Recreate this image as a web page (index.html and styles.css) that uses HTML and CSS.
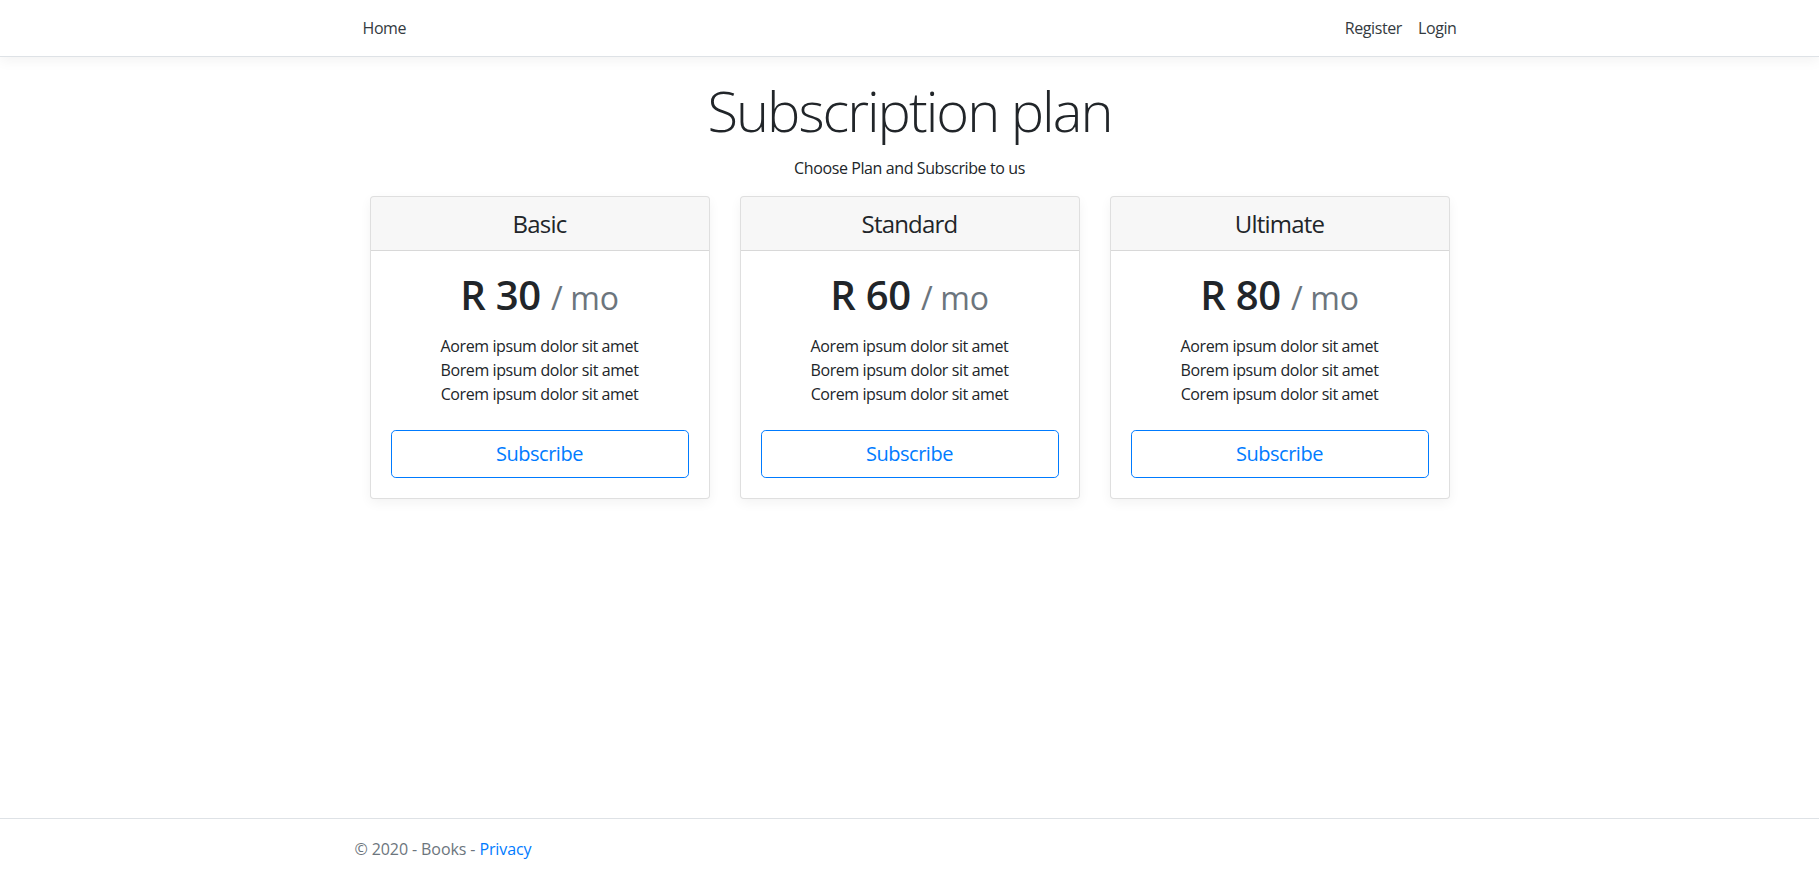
FILE: index.html
```html
<!DOCTYPE html>
<html lang="en">
<head>
<meta charset="utf-8">
<title>Subscription plan - Books</title>
<link rel="stylesheet" href="styles.css">
</head>
<body>
<header class="site-header">
  <nav class="navbar">
    <div class="container nav-inner">
      <ul class="nav-list">
        <li><a class="nav-link" href="#">Home</a></li>
      </ul>
      <ul class="nav-list">
        <li><a class="nav-link" href="#">Register</a></li>
        <li><a class="nav-link" href="#">Login</a></li>
      </ul>
    </div>
  </nav>
</header>

<main class="container main">
  <div class="pricing-header">
    <h1 class="display-title">Subscription plan</h1>
    <p class="subtitle">Choose Plan and Subscribe to us</p>
  </div>
  <div class="inner">
    <div class="card-deck">
      <div class="card">
        <div class="card-header"><h4 class="plan-name">Basic</h4></div>
        <div class="card-body">
          <h1 class="price">R 30 <small class="per">/ mo</small></h1>
          <ul class="features">
            <li>Aorem ipsum dolor sit amet</li>
            <li>Borem ipsum dolor sit amet</li>
            <li>Corem ipsum dolor sit amet</li>
          </ul>
          <button class="btn-subscribe" type="button">Subscribe</button>
        </div>
      </div>
      <div class="card">
        <div class="card-header"><h4 class="plan-name">Standard</h4></div>
        <div class="card-body">
          <h1 class="price">R 60 <small class="per">/ mo</small></h1>
          <ul class="features">
            <li>Aorem ipsum dolor sit amet</li>
            <li>Borem ipsum dolor sit amet</li>
            <li>Corem ipsum dolor sit amet</li>
          </ul>
          <button class="btn-subscribe" type="button">Subscribe</button>
        </div>
      </div>
      <div class="card">
        <div class="card-header"><h4 class="plan-name">Ultimate</h4></div>
        <div class="card-body">
          <h1 class="price">R 80 <small class="per">/ mo</small></h1>
          <ul class="features">
            <li>Aorem ipsum dolor sit amet</li>
            <li>Borem ipsum dolor sit amet</li>
            <li>Corem ipsum dolor sit amet</li>
          </ul>
          <button class="btn-subscribe" type="button">Subscribe</button>
        </div>
      </div>
    </div>
  </div>
</main>

<footer class="footer">
  <div class="container footer-inner">
    &copy; 2020 - Books - <a class="footer-link" href="#">Privacy</a>
  </div>
</footer>
</body>
</html>
```

FILE: styles.css
```css
* { box-sizing: border-box; }

html, body { height: 100%; }

body {
  margin: 0;
  min-height: 100vh;
  display: flex;
  flex-direction: column;
  font-family: "Open Sans", "Noto Sans", "Liberation Sans", sans-serif;
  font-size: 16px;
  line-height: 1.5;
  letter-spacing: -0.4px;
  color: #212529;
  background: #fff;
}

.container {
  width: 100%;
  max-width: 1140px;
  margin: 0 auto;
  padding: 0 15px;
}

/* navbar */
.site-header { flex: none; }

.navbar {
  padding: 8px 0;
  background: #fff;
  border-bottom: 1px solid #dee2e6;
  box-shadow: 0 4px 12px rgba(0, 0, 0, 0.05);
}

.nav-inner {
  display: flex;
  justify-content: space-between;
  align-items: center;
}

.nav-list {
  display: flex;
  list-style: none;
  margin: 0;
  padding: 0;
}

.nav-link {
  display: block;
  padding: 8px;
  color: #343a40;
  text-decoration: none;
  line-height: 24px;
}

/* main */
.main {
  flex: 1 0 auto;
  margin-top: 20px;
}

.pricing-header { text-align: center; }

.display-title {
  margin: 0 0 12px;
  font-size: 56px;
  font-weight: 300;
  line-height: 67px;
  letter-spacing: -2px;
}

.subtitle {
  margin: 0 0 16px;
  line-height: 24px;
}

.inner { padding: 0 15px; }

.card-deck {
  display: flex;
  margin: 0 -15px;
}

.card {
  flex: 1 0 0;
  margin: 0 15px 24px;
  border: 1px solid rgba(0, 0, 0, 0.125);
  border-radius: 4px;
  background: #fff;
  box-shadow: 0 4px 12px rgba(0, 0, 0, 0.05);
  text-align: center;
  overflow: hidden;
}

.card-header {
  padding: 12px 20px;
  background: rgba(0, 0, 0, 0.03);
  border-bottom: 1px solid rgba(0, 0, 0, 0.125);
}

.plan-name {
  margin: 0;
  font-size: 24px;
  font-weight: 400;
  line-height: 28.8px;
  letter-spacing: -0.8px;
  position: relative;
  top: 1px;
}

.card-body { padding: 20px; }

.price {
  margin: 0 0 12px;
  font-size: 40px;
  font-weight: 600;
  line-height: 48px;
  letter-spacing: -0.3px;
}

.per {
  font-size: 32px;
  font-weight: 400;
  color: #6c757d;
}

.features {
  list-style: none;
  margin: 0 0 24px;
  padding: 0;
}

.features li { line-height: 24px; }

.btn-subscribe {
  display: block;
  width: 100%;
  padding: 8px 16px;
  font-family: inherit;
  font-size: 20px;
  line-height: 30px;
  letter-spacing: -0.5px;
  color: #007bff;
  background: transparent;
  border: 1px solid #007bff;
  border-radius: 4.8px;
  cursor: pointer;
}

/* footer */
.footer {
  flex: none;
  border-top: 1px solid #dee2e6;
  line-height: 60px;
  white-space: nowrap;
  color: #6c757d;
  letter-spacing: -0.1px;
}

.footer-link {
  color: #007bff;
  text-decoration: none;
}
```
